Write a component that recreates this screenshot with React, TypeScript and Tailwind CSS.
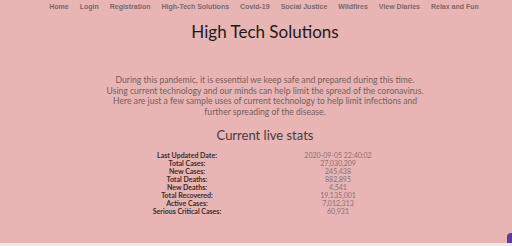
const links = [
  'Home',
  'Login',
  'Registration',
  'High-Tech Solutions',
  'Covid-19',
  'Social Justice',
  'Wildfires',
  'View Diaries',
  'Relax and Fun',
];

const stats = [
  ['Last Updated Date:', '2020-09-05 22:40:02'],
  ['Total Cases:', '27,030,209'],
  ['New Cases:', '245,438'],
  ['Total Deaths:', '882,895'],
  ['New Deaths:', '4,541'],
  ['Total Recovered:', '19,135,001'],
  ['Active Cases:', '7,012,313'],
  ['Serious Critical Cases:', '60,931'],
];

export default function App() {
  return (
    <div className="relative flex h-[246px] w-[512px] flex-col overflow-hidden bg-[#e8b4b4] font-['Lato',sans-serif]">
      <nav className="flex h-[13px] items-center justify-center gap-[11px] pl-[16px] pt-[1px] font-['Liberation_Sans',Arial,sans-serif] text-[7px] font-bold text-[#786a6e]">
        {links.map((l) => (
          <span key={l}>{l}</span>
        ))}
      </nav>

      <div className="flex flex-col pl-[18px]">
        <h1 className="mt-[6px] text-center text-[17px] leading-[26px] text-[#1f1a1a]">
          High Tech Solutions
        </h1>

        <p className="mx-auto mt-[30px] w-[340px] text-center text-[8.6px] leading-[10.5px] text-[#765f5f]">
          During this pandemic, it is essential we keep safe and prepared during this time.
          <br />
          Using current technology and our minds can help limit the spread of the coronavirus.
          <br />
          Here are just a few sample uses of current technology to help limit infections and
          <br />
          further spreading of the disease.
        </p>

        <h2 className="mt-[8px] text-center text-[13px] leading-[20px] text-[#4a3a3a]">
          Current live stats
        </h2>
      </div>

      <div className="mt-[6px] grid w-full grid-cols-[262px_152px] text-[7px] leading-[8px]">
        {stats.map(([k, v]) => (
          <div key={k} className="contents">
            <span className="pl-[112px] text-center font-bold text-[#3a2c2c]">{k}</span>
            <span className="text-center text-[#8a7272]">{v}</span>
          </div>
        ))}
      </div>

      <div className="mt-auto h-[3px] w-full bg-[#efe9e9]" />
      <div className="absolute bottom-[3px] right-0 h-[10px] w-[5px] rounded-tl-[4px] bg-[#5a3d9e]" />
    </div>
  );
}
